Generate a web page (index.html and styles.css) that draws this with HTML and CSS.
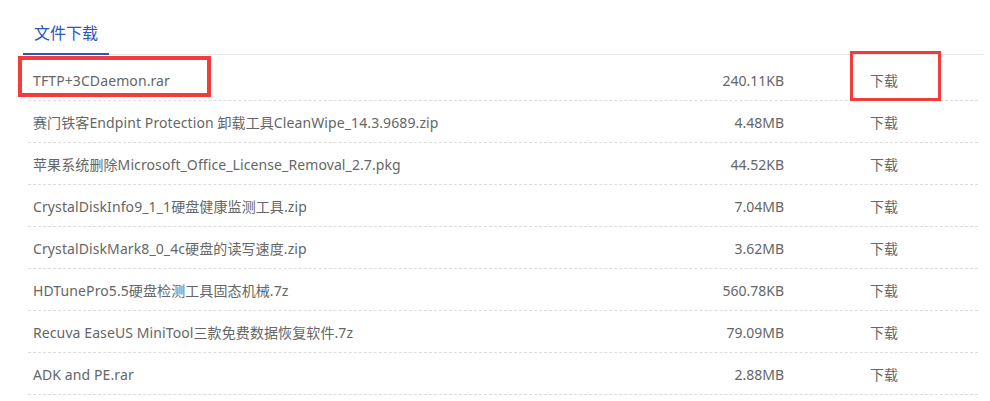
FILE: index.html
```html
<!DOCTYPE html>
<html lang="zh-CN">
<head>
<meta charset="utf-8">
<title>文件下载</title>
<link rel="stylesheet" href="styles.css">
</head>
<body>
<div class="panel">
  <div class="tabs">
    <div class="tab active">文件下载</div>
  </div>
  <div class="list">
    <div class="row">
      <span class="mark mark-name"></span>
      <span class="mark mark-act"></span>
      <div class="name">TFTP+3CDaemon.rar</div>
      <div class="size">240.11KB</div>
      <div class="act">下载</div>
    </div>
    <div class="row">
      <div class="name">赛门铁客Endpint Protection 卸载工具CleanWipe_14.3.9689.zip</div>
      <div class="size">4.48MB</div>
      <div class="act">下载</div>
    </div>
    <div class="row">
      <div class="name">苹果系统删除Microsoft_Office_License_Removal_2.7.pkg</div>
      <div class="size">44.52KB</div>
      <div class="act">下载</div>
    </div>
    <div class="row">
      <div class="name">CrystalDiskInfo9_1_1硬盘健康监测工具.zip</div>
      <div class="size">7.04MB</div>
      <div class="act">下载</div>
    </div>
    <div class="row">
      <div class="name">CrystalDiskMark8_0_4c硬盘的读写速度.zip</div>
      <div class="size">3.62MB</div>
      <div class="act">下载</div>
    </div>
    <div class="row">
      <div class="name">HDTunePro5.5硬盘检测工具固态机械.7z</div>
      <div class="size">560.78KB</div>
      <div class="act">下载</div>
    </div>
    <div class="row">
      <div class="name">Recuva EaseUS MiniTool三款免费数据恢复软件.7z</div>
      <div class="size">79.09MB</div>
      <div class="act">下载</div>
    </div>
    <div class="row">
      <div class="name">ADK and PE.rar</div>
      <div class="size">2.88MB</div>
      <div class="act">下载</div>
    </div>
  </div>
</div>
</body>
</html>
```

FILE: styles.css
```css
* { box-sizing: border-box; }
html, body { margin: 0; padding: 0; background: #fff; }
body {
  font-family: "Noto Sans", "Noto Sans CJK SC", sans-serif;
  font-size: 14px;
  color: #666;
}
.panel {
  width: 960px;
  margin-left: 23px;
  padding-top: 12px;
}
.tabs {
  display: flex;
  border-bottom: 1px solid #e6e6e6;
}
.tab {
  padding: 0 10px;
  height: 43px;
  line-height: 40px;
  font-size: 16px;
  font-family: "Noto Sans CJK SC", sans-serif;
  color: #2a56c0;
  border-bottom: 2px solid #2a56c0;
  margin-bottom: -1px;
  width: 86px;
  text-align: center;
}
.list {
  margin: 0 5px;
  padding-top: 4px;
}
.row {
  position: relative;
  display: grid;
  grid-template-columns: 1fr 150px 194px;
  height: 42px;
  align-items: center;
  border-bottom: 1px dashed #dcdcdc;
  padding-top: 1px;
}
.name { padding-left: 5px; white-space: nowrap; letter-spacing: 0.1px; }
.size { text-align: right; }
.act { padding-left: 86px; }
.mark {
  position: absolute;
  border: 4px solid #f43b3b;
  pointer-events: none;
}
.mark-name { left: -10px; top: -3px; width: 193px; height: 41px; }
.mark-act { left: 822px; top: -8px; width: 91px; height: 50px; border-width: 3.5px; }
```
